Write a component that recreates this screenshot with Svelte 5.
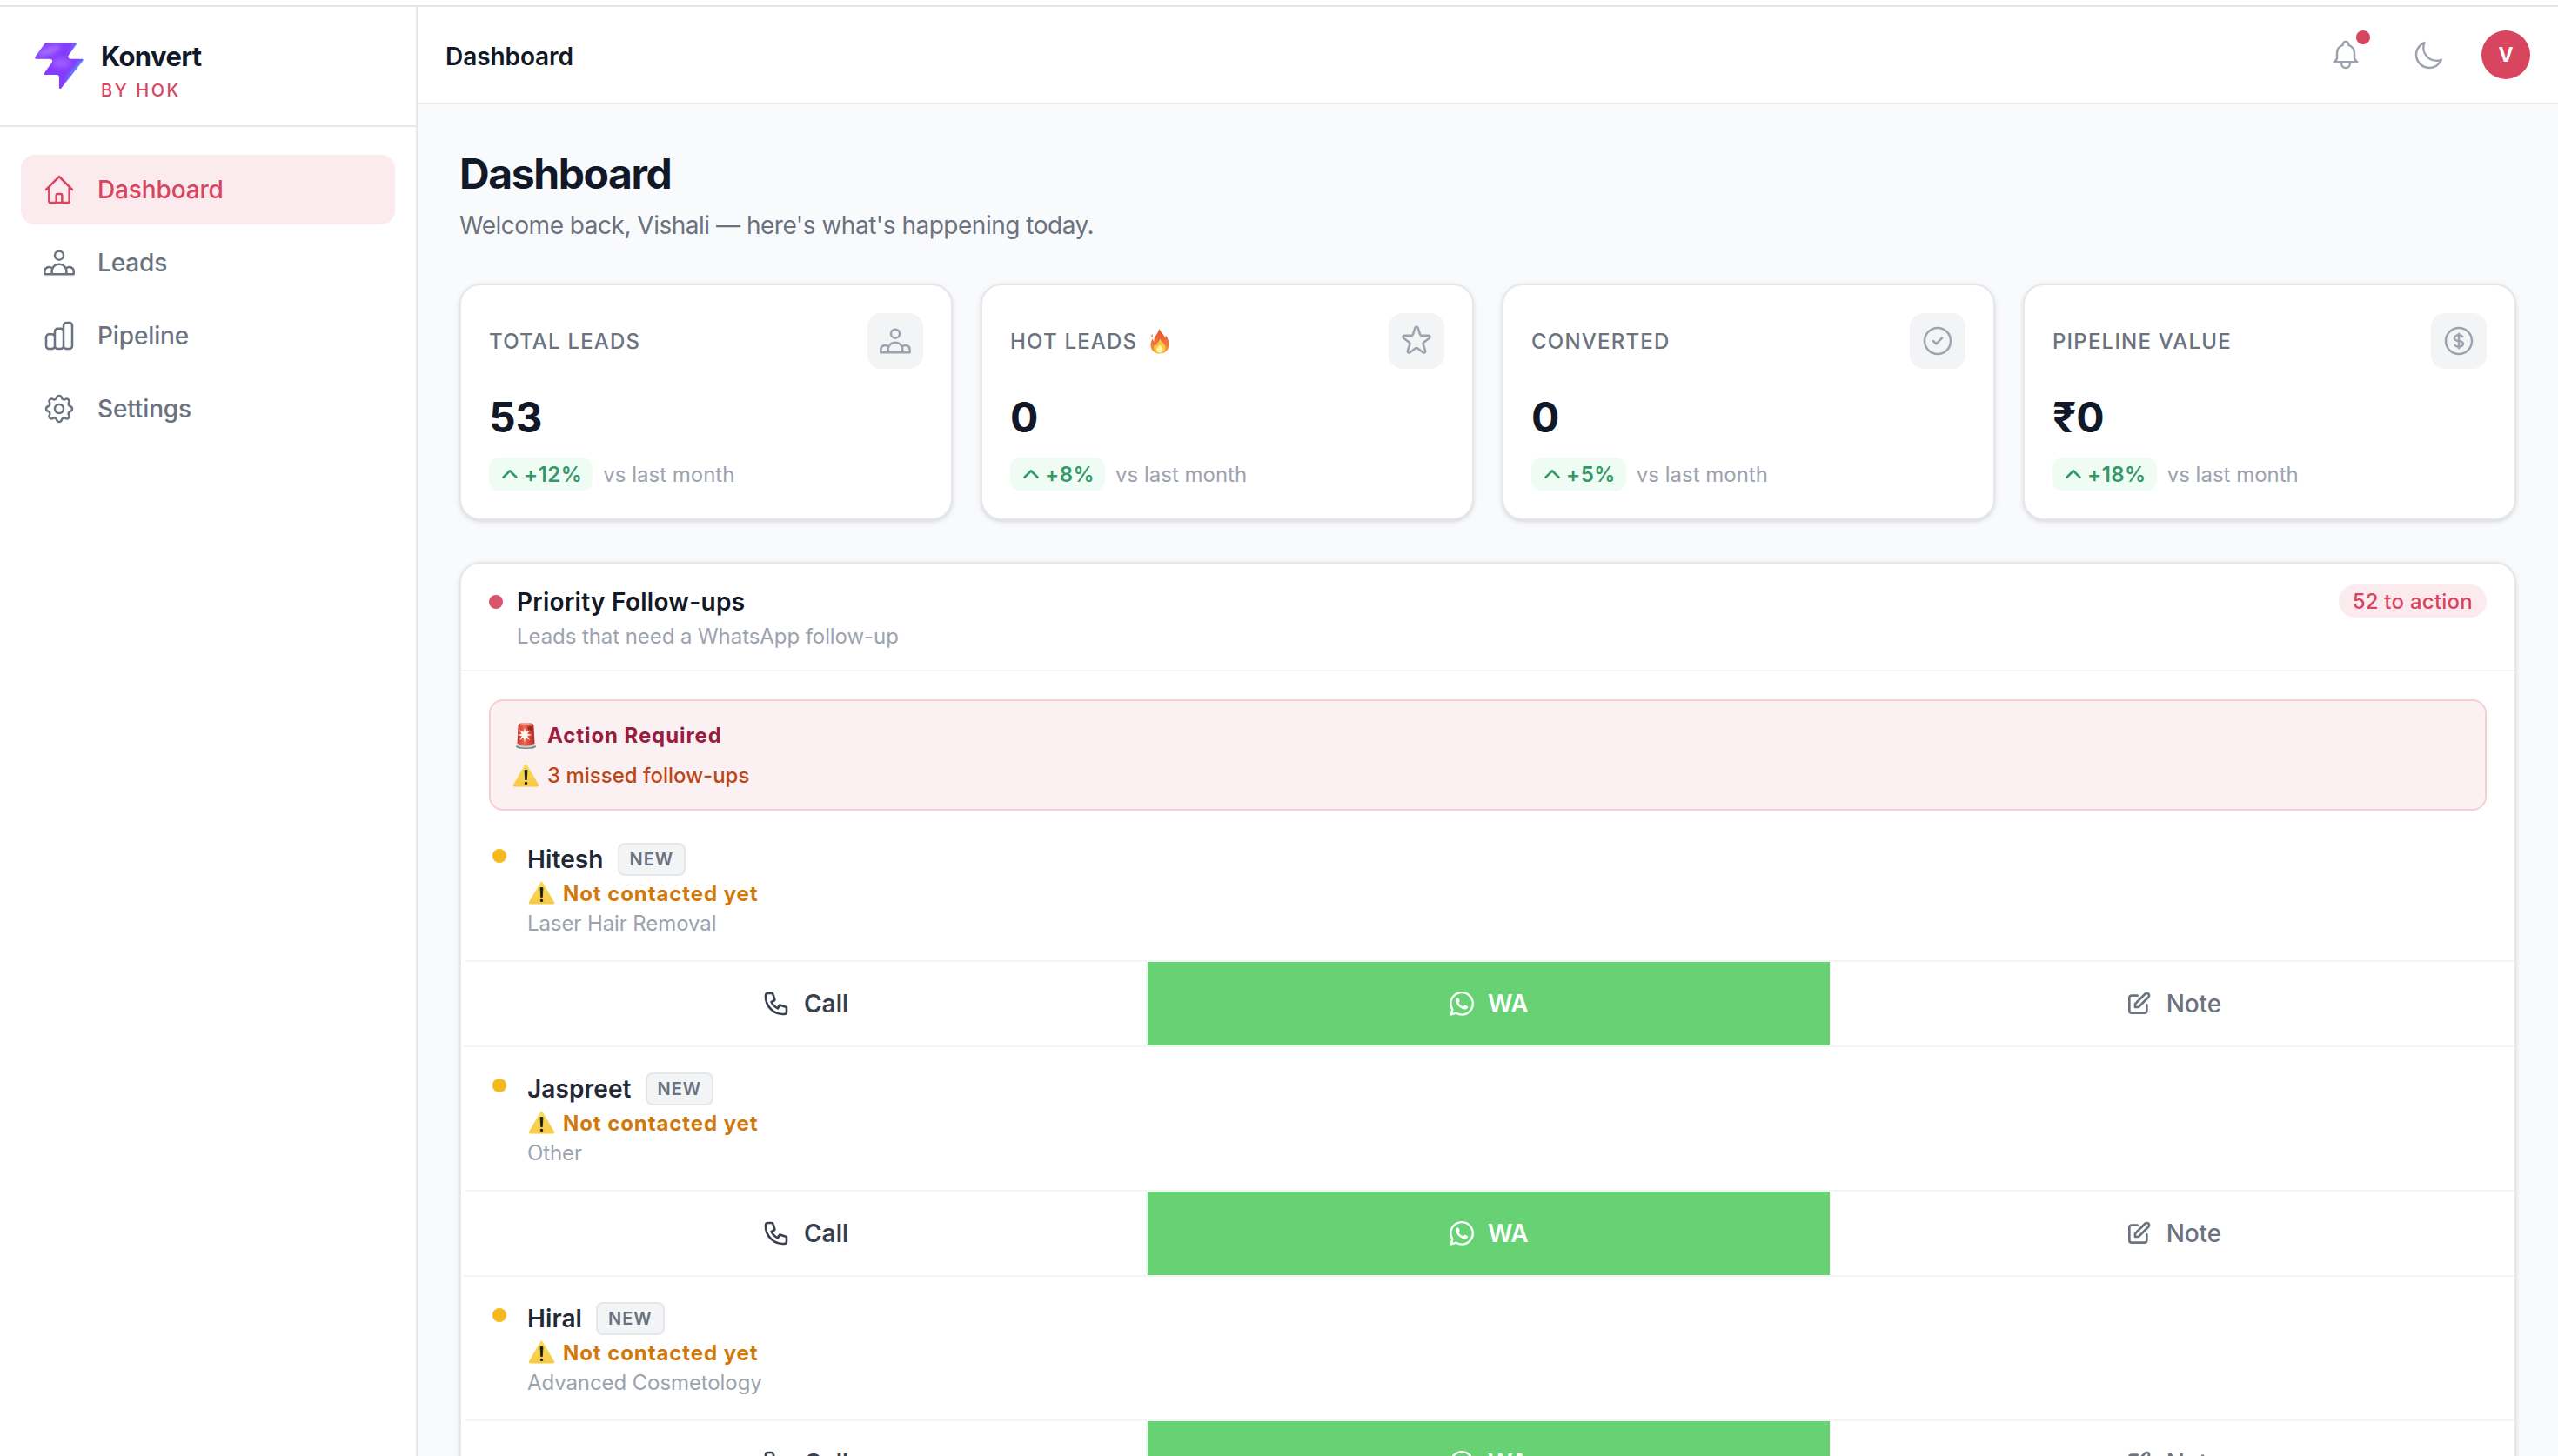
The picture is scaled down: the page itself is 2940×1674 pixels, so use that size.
<script lang="ts">
  type Lead = { name: string; interest: string };

  const icons: Record<string, string> = {
    home: 'M3 12l2-2m0 0l7-7 7 7M5 10v10a1 1 0 001 1h3m10-11l2 2m-2-2v10a1 1 0 01-1 1h-3m-6 0a1 1 0 001-1v-4a1 1 0 011-1h2a1 1 0 011 1v4a1 1 0 001 1m-6 0h6',
    users: 'M17 20h5v-2a3 3 0 00-5.356-1.857M17 20H7m10 0v-2c0-.656-.126-1.283-.356-1.857M7 20H2v-2a3 3 0 015.356-1.857M7 20v-2c0-.656.126-1.283.356-1.857m0 0a5.002 5.002 0 019.288 0M15 7a3 3 0 11-6 0 3 3 0 016 0z',
    chart: 'M9 19v-6a2 2 0 00-2-2H5a2 2 0 00-2 2v6a2 2 0 002 2h2a2 2 0 002-2zm0 0V9a2 2 0 012-2h2a2 2 0 012 2v10m-6 0a2 2 0 002 2h2a2 2 0 002-2m0 0V5a2 2 0 012-2h2a2 2 0 012 2v14a2 2 0 01-2 2h-2a2 2 0 01-2-2z',
    cog: 'M10.325 4.317c.426-1.756 2.924-1.756 3.35 0a1.724 1.724 0 002.573 1.066c1.543-.94 3.31.826 2.37 2.37a1.724 1.724 0 001.065 2.572c1.756.426 1.756 2.924 0 3.35a1.724 1.724 0 00-1.066 2.573c.94 1.543-.826 3.31-2.37 2.37a1.724 1.724 0 00-2.572 1.065c-.426 1.756-2.924 1.756-3.35 0a1.724 1.724 0 00-2.573-1.066c-1.543.94-3.31-.826-2.37-2.37a1.724 1.724 0 00-1.065-2.572c-1.756-.426-1.756-2.924 0-3.35a1.724 1.724 0 001.066-2.573c-.94-1.543.826-3.31 2.37-2.37.996.608 2.296.07 2.572-1.065zM15 12a3 3 0 11-6 0 3 3 0 016 0z',
    star: 'M11.049 2.927c.3-.921 1.603-.921 1.902 0l1.519 4.674a1 1 0 00.95.69h4.915c.969 0 1.371 1.24.588 1.81l-3.976 2.888a1 1 0 00-.363 1.118l1.518 4.674c.3.922-.755 1.688-1.538 1.118l-3.976-2.888a1 1 0 00-1.176 0l-3.976 2.888c-.783.57-1.838-.197-1.538-1.118l1.518-4.674a1 1 0 00-.363-1.118l-3.976-2.888c-.784-.57-.38-1.81.588-1.81h4.914a1 1 0 00.951-.69l1.519-4.674z',
    check: 'M9 12l2 2 4-4m6 2a9 9 0 11-18 0 9 9 0 0118 0z',
    dollar: 'M12 8c-1.657 0-3 .895-3 2s1.343 2 3 2 3 .895 3 2-1.343 2-3 2m0-8c1.11 0 2.08.402 2.599 1M12 8V7m0 1v8m0 0v1m0-1c-1.11 0-2.08-.402-2.599-1M21 12a9 9 0 11-18 0 9 9 0 0118 0z',
    bell: 'M15 17h5l-1.405-1.405A2.032 2.032 0 0118 14.158V11a6.002 6.002 0 00-4-5.659V5a2 2 0 10-4 0v.341C7.67 6.165 6 8.388 6 11v3.159c0 .538-.214 1.055-.595 1.436L4 17h5m6 0v1a3 3 0 11-6 0v-1m6 0H9',
    moon: 'M20.354 15.354A9 9 0 018.646 3.646 9.003 9.003 0 0012 21a9.003 9.003 0 008.354-5.646z',
    up: 'M4.5 15.75l7.5-7.5 7.5 7.5',
    phone: 'M3 5a2 2 0 012-2h3.28a1 1 0 01.948.684l1.498 4.493a1 1 0 01-.502 1.21l-2.257 1.13a11.042 11.042 0 005.516 5.516l1.13-2.257a1 1 0 011.21-.502l4.493 1.498a1 1 0 01.684.949V19a2 2 0 01-2 2h-1C9.716 21 3 14.284 3 6V5z',
    edit: 'M11 5H6a2 2 0 00-2 2v11a2 2 0 002 2h11a2 2 0 002-2v-5m-1.414-9.414a2 2 0 112.828 2.828L11.828 15H9v-2.828l8.586-8.586z',
  };

  const bolt =
    'M25.946 44.938c-.664.845-2.021.375-2.021-.698V33.937a2.26 2.26 0 0 0-2.262-2.262H10.287c-.92 0-1.456-1.04-.92-1.788l7.48-10.471c1.07-1.497 0-3.578-1.842-3.578H1.237c-.92 0-1.456-1.04-.92-1.788L10.013.474c.214-.297.556-.474.92-.474h28.894c.92 0 1.456 1.04.92 1.788l-7.48 10.471c-1.07 1.498 0 3.579 1.842 3.579h11.377c.943 0 1.473 1.088.89 1.83L25.947 44.94z';

  const nav = [
    { label: 'Dashboard', icon: 'home' },
    { label: 'Leads', icon: 'users' },
    { label: 'Pipeline', icon: 'chart' },
    { label: 'Settings', icon: 'cog' },
  ];

  const stats = [
    { label: 'Total Leads', value: '53', change: '+12%', icon: 'users', hot: false },
    { label: 'Hot Leads', value: '0', change: '+8%', icon: 'star', hot: true },
    { label: 'Converted', value: '0', change: '+5%', icon: 'check', hot: false },
    { label: 'Pipeline Value', value: '₹0', change: '+18%', icon: 'dollar', hot: false },
  ];

  const leads: Lead[] = [
    { name: 'Hitesh', interest: 'Laser Hair Removal' },
    { name: 'Jaspreet', interest: 'Other' },
    { name: 'Hiral', interest: 'Advanced Cosmetology' },
  ];

  let active = $state('Dashboard');
</script>

{#snippet icon(name: string, kind: string)}
  <svg class="icon {kind}" viewBox="0 0 24 24" aria-hidden="true">
    <path d={icons[name]} />
  </svg>
{/snippet}

{#snippet warning()}
  <svg class="emoji" viewBox="0 0 32 32" aria-hidden="true">
    <path d="M15.1 3.6q1.4-2.2 2.8 0l13 22.4q1 2.4-1.4 2.6h-26q-2.4-.2-1.4-2.6z" fill="url(#warn)" />
    <path d="M15 9.6h3l-.7 11h-1.6z" fill="#1b1a10" stroke="#1b1a10" stroke-width=".8" stroke-linejoin="round" />
    <circle cx="16.5" cy="24.4" r="1.7" fill="#1b1a10" />
  </svg>
{/snippet}

<svg class="defs" width="0" height="0" aria-hidden="true">
  <defs>
    <linearGradient id="warn" x1="0" y1="0" x2="0" y2="1">
      <stop offset="0" stop-color="#f7de62" />
      <stop offset="1" stop-color="#f7c843" />
    </linearGradient>
    <linearGradient id="flame" x1="0" y1="0" x2="0" y2="1">
      <stop offset="0" stop-color="#e8502f" />
      <stop offset=".6" stop-color="#f0763a" />
      <stop offset="1" stop-color="#f6a83c" />
    </linearGradient>
    <linearGradient id="siren" x1="0" y1="0" x2="1" y2="0">
      <stop offset="0" stop-color="#c8352b" />
      <stop offset=".4" stop-color="#ee6a52" />
      <stop offset="1" stop-color="#b52c22" />
    </linearGradient>
    <clipPath id="boltClip"><path d={bolt} /></clipPath>
    <filter id="soft" x="-50%" y="-50%" width="200%" height="200%">
      <feGaussianBlur stdDeviation="2.5" />
    </filter>
  </defs>
</svg>

<div class="app">
  <aside class="sidebar">
    <div class="brand">
      <svg class="logo" viewBox="0 0 48 46" aria-hidden="true">
        <path d={bolt} fill="#863bff" />
        <g clip-path="url(#boltClip)">
          <g filter="url(#soft)">
            <ellipse cx="14" cy="8" rx="12" ry="4" fill="#a06bff" transform="rotate(-20 14 8)" />
            <ellipse cx="26" cy="20" rx="9" ry="5" fill="#9a5cff" />
            <ellipse cx="42" cy="4" rx="4" ry="10" fill="#5b8dff" transform="rotate(30 42 4)" />
            <ellipse cx="41" cy="30" rx="4.5" ry="17" fill="#47a5ff" transform="rotate(35 41 30)" />
          </g>
        </g>
      </svg>
      <div class="brand-text">
        <span class="brand-name">Konvert</span>
        <span class="brand-by">BY HOK</span>
      </div>
    </div>
    <nav>
      {#each nav as item}
        <button class="nav-item" class:active={active === item.label} onclick={() => (active = item.label)}>
          {@render icon(item.icon, 'md')}
          <span>{item.label}</span>
        </button>
      {/each}
    </nav>
  </aside>

  <div class="content">
    <header class="topbar">
      <span class="topbar-title">Dashboard</span>
      <div class="tools">
        <button class="tool" aria-label="Notifications">
          {@render icon('bell', 'md')}
          <span class="unread"></span>
        </button>
        <button class="tool" aria-label="Theme">{@render icon('moon', 'md')}</button>
        <div class="avatar">V</div>
      </div>
    </header>

    <main>
      <h1>Dashboard</h1>
      <p class="welcome">Welcome back, Vishali — here's what's happening today.</p>

      <section class="stats">
        {#each stats as stat}
          <div class="card">
            <div class="card-top">
              <span class="card-label">
                {stat.label}
                {#if stat.hot}
                  <svg class="flame" viewBox="0 0 24 32" aria-hidden="true">
                    <path d="M11 .5c1 4 6 6.500 7.500 12 .6-1 .8-2.300.7-3.600 3 4 4 8 4 12 0 6.500-5 10.600-11 10.600S.8 27.500.8 21.500c0-3.500 1-6 2.600-8.200.2 1.600.8 2.600 1.500 3.200C4.600 9.500 11 7 11 .5z" fill="url(#flame)" />
                    <path d="M2.500 7.500c-1 1.500-1.300 3 0 4.500 1-1 1-3 0-4.500z" fill="#f0763a" />
                    <path d="M12.500 13c.5 4 6.500 6 6.500 11.500 0 4-3 6.500-7 6.500s-7.200-2.500-7.200-6.500c0-2 .7-3.500 1.700-4.700.5 1 1 1.600 1.800 2C8 18.500 11.500 17 12.500 13z" fill="#fac63f" />
                    <path d="M12 20.500c1 2 3.800 3 3.800 6 0 2.500-1.700 4-3.900 4s-3.900-1.500-3.900-4c0-2.500 3-3.500 4-6z" fill="#fff6a8" />
                  </svg>
                {/if}
              </span>
              <span class="card-icon">{@render icon(stat.icon, 'md')}</span>
            </div>
            <div class="card-value">{stat.value}</div>
            <div class="card-trend">
              <span class="change">{@render icon('up', 'xs')}{stat.change}</span>
              <span class="period">vs last month</span>
            </div>
          </div>
        {/each}
      </section>

      <section class="panel">
        <div class="panel-head">
          <span class="pulse"></span>
          <div class="panel-text">
            <h2>Priority Follow-ups</h2>
            <p>Leads that need a WhatsApp follow-up</p>
          </div>
          <span class="count">52 to action</span>
        </div>

        <div class="alert">
          <div class="alert-title">
            <svg class="emoji" viewBox="0 0 32 32" aria-hidden="true">
              <path d="M5 26h23v2.500q-1 2.500-11.500 2.500T5 28.500z" fill="#7c7f80" />
              <path d="M5 25.500q11.500 4 23 0v2q-11.500 4.500-23 0z" fill="#c9cccc" />
              <path d="M7.500 4.500Q8 1.600 11 1.500h11q3 .1 3.500 3L26.500 25q-10 4.500-20 0z" fill="url(#siren)" />
              <path d="M18 6l6-1.500-.5 5-3.500 2z" fill="#9c2a20" />
              <path d="M10 3.500q6.500-2 13 0" fill="none" stroke="#f59a84" stroke-width="1.500" />
              <path d="M15 6.500l1.300 5.300 4.700-2.600-2.800 4.500 5.300 1.300-5.300 1.200 2.800 4.800-4.700-2.800L15 23.500l-1.200-5.300L9 21l2.700-4.800L6.500 15l5.200-1.300L9 9.200l4.800 2.600z" fill="#fff3ec" />
            </svg>
            Action Required
          </div>
          <div class="alert-line">{@render warning()}3 missed follow-ups</div>
        </div>

        {#each leads as lead}
          <article class="lead">
            <div class="lead-body">
              <span class="lead-dot"></span>
              <div>
                <div class="lead-name">{lead.name}<span class="tag">NEW</span></div>
                <div class="lead-status">{@render warning()}Not contacted yet</div>
                <div class="lead-interest">{lead.interest}</div>
              </div>
            </div>
            <div class="actions">
              <button class="action call">{@render icon('phone', 'sm')}Call</button>
              <button class="action wa">
                <svg class="wa-icon" viewBox="0 0 24 24" aria-hidden="true">
                  <path d="M17.472 14.382c-.297-.149-1.758-.867-2.030-.967-.273-.099-.471-.148-.670.150-.197.297-.767.966-.940 1.164-.173.199-.347.223-.644.075-.297-.150-1.255-.463-2.390-1.475-.883-.788-1.480-1.761-1.653-2.059-.173-.297-.018-.458.130-.606.134-.133.298-.347.446-.520.149-.174.198-.298.298-.497.099-.198.050-.371-.025-.520-.075-.149-.669-1.612-.916-2.207-.242-.579-.487-.500-.669-.510-.173-.008-.371-.010-.570-.010-.198 0-.520.074-.792.372-.272.297-1.040 1.016-1.040 2.479 0 1.462 1.065 2.875 1.213 3.074.149.198 2.096 3.200 5.077 4.487.709.306 1.262.489 1.694.625.712.227 1.360.195 1.871.118.571-.085 1.758-.719 2.006-1.413.248-.694.248-1.289.173-1.413-.074-.124-.272-.198-.570-.347m-5.421 7.403h-.004a9.870 9.870 0 01-5.031-1.378l-.361-.214-3.741.982.998-3.648-.235-.374a9.860 9.860 0 01-1.510-5.260c.001-5.450 4.436-9.884 9.888-9.884 2.640 0 5.122 1.030 6.988 2.898a9.825 9.825 0 012.893 6.994c-.003 5.450-4.437 9.884-9.885 9.884m8.413-18.297A11.815 11.815 0 0012.050 0C5.495 0 .160 5.335.157 11.892c0 2.096.547 4.142 1.588 5.945L.057 24l6.305-1.654a11.882 11.882 0 005.683 1.448h.005c6.554 0 11.890-5.335 11.893-11.893a11.821 11.821 0 00-3.480-8.413z" />
                </svg>
                WA
              </button>
              <button class="action note">{@render icon('edit', 'sm')}Note</button>
            </div>
          </article>
        {/each}
      </section>
    </main>
  </div>
</div>

<style>
  :global(body) {
    overflow: hidden;
    background: #fff;
  }

  :global(#app) {
    padding-top: 6px;
    height: 1668px;
    overflow: hidden;
  }

  .defs { position: absolute; }

  .app {
    display: flex;
    box-sizing: border-box;
    height: 1668px;
    border-top: 2px solid #e4e5e6;
    font-family: Inter, 'Noto Sans', sans-serif;
    font-size: 28px;
    color: #111827;
    overflow: hidden;
  }

  .app * { box-sizing: border-box; }

  button {
    font: inherit;
    color: inherit;
    background: none;
    border: 0;
    padding: 0;
    cursor: pointer;
  }

  .icon {
    flex: none;
    width: 40px;
    height: 40px;
    fill: none;
    stroke: currentColor;
    stroke-width: 1.5;
    stroke-linecap: round;
    stroke-linejoin: round;
  }
  .icon.sm { width: 32px; height: 32px; stroke-width: 2; }
  .icon.xs { width: 24px; height: 24px; stroke-width: 2.5; }

  .emoji { flex: none; width: 32px; height: 32px; }

  .sidebar {
    flex: none;
    width: 480px;
    border-right: 2px solid #e5e7eb;
    background: #fff;
  }

  .brand {
    display: flex;
    gap: 20px;
    height: 138px;
    padding: 34px 40px 0;
    border-bottom: 2px solid #e5e7eb;
  }

  .logo { width: 56px; height: 68px; }

  .brand-text { display: flex; flex-direction: column; padding-top: 3px; }

  .brand-name {
    font-size: 31px;
    font-weight: 700;
    line-height: 40px;
    letter-spacing: -0.02em;
  }

  .brand-by {
    margin-top: 3px;
    font-size: 20px;
    font-weight: 500;
    line-height: 32px;
    letter-spacing: 0.13em;
    color: #d9445f;
  }

  nav {
    display: flex;
    flex-direction: column;
    gap: 4px;
    padding: 32px 24px;
  }

  .nav-item {
    display: flex;
    align-items: center;
    gap: 24px;
    height: 80px;
    padding: 0 24px;
    border-radius: 16px;
    font-weight: 500;
    letter-spacing: -0.005em;
    color: #6b7280;
  }
  .nav-item.active { background: #fbebee; color: #d9445f; }

  .content {
    flex: 1;
    display: flex;
    flex-direction: column;
    min-width: 0;
    background: #f9fafc;
  }

  .topbar {
    flex: none;
    display: flex;
    align-items: center;
    justify-content: space-between;
    height: 112px;
    padding: 0 32px;
    border-bottom: 2px solid #e5e7eb;
    background: #fff;
  }

  .topbar-title {
    padding-top: 3px;
    font-weight: 600;
    letter-spacing: -0.003em;
  }

  .tools { display: flex; align-items: center; gap: 24px; }

  .tool {
    position: relative;
    display: flex;
    padding: 16px;
    color: #9ca3af;
  }

  .unread {
    position: absolute;
    top: 8px;
    right: 8px;
    width: 16px;
    height: 16px;
    border-radius: 50%;
    background: #d7455e;
  }

  .avatar {
    display: grid;
    place-items: center;
    width: 56px;
    height: 56px;
    border-radius: 50%;
    background: #d7455e;
    color: #fff;
    font-size: 23px;
    font-weight: 700;
  }

  main { padding: 48px; }

  h1, h2, p { margin: 0; }

  h1 {
    font-size: 48px;
    font-weight: 700;
    line-height: 64px;
    letter-spacing: -0.029em;
  }

  .welcome {
    margin-top: 7px;
    line-height: 40px;
    letter-spacing: -0.0175em;
    color: #6b7280;
  }

  .stats {
    display: grid;
    grid-template-columns: repeat(4, 1fr);
    gap: 32px;
    margin: 47px 0 48px;
  }

  .card {
    height: 272px;
    padding: 32px;
    border: 2px solid #e5e7eb;
    border-radius: 24px;
    background: #fff;
    box-shadow: 0 2px 6px rgba(0, 0, 0, 0.1), 0 2px 4px -2px rgba(0, 0, 0, 0.1);
  }

  .card-top {
    display: flex;
    align-items: center;
    justify-content: space-between;
  }

  .card-label {
    display: flex;
    align-items: center;
    gap: 13px;
    font-size: 24px;
    font-weight: 500;
    letter-spacing: 0.05em;
    text-transform: uppercase;
    color: #6b7280;
  }

  .flame { width: 26px; height: 30px; }

  .card-icon {
    display: grid;
    place-items: center;
    width: 64px;
    height: 64px;
    border-radius: 16px;
    background: #f3f4f6;
    color: #9ca3af;
  }

  .card-value {
    margin-top: 24px;
    font-size: 48px;
    font-weight: 700;
    line-height: 64px;
    letter-spacing: -0.005em;
  }

  .card-trend {
    display: flex;
    align-items: center;
    gap: 12px;
    margin-top: 14px;
    font-size: 24px;
  }

  .change {
    display: flex;
    align-items: center;
    gap: 4px;
    height: 38px;
    padding: 0 12px;
    border-radius: 12px;
    background: #eefcf4;
    font-weight: 600;
    letter-spacing: 0.02em;
    color: #349868;
  }

  .period { color: #9ca3af; }

  .panel {
    height: 1200px;
    border: 2px solid #e5e7eb;
    border-radius: 24px;
    background: #fff;
    box-shadow: 0 2px 6px rgba(0, 0, 0, 0.1), 0 2px 4px -2px rgba(0, 0, 0, 0.1);
  }

  .panel-head {
    display: flex;
    align-items: flex-start;
    gap: 16px;
    height: 124px;
    padding: 24px 32px;
    border-bottom: 2px solid #f3f4f6;
  }

  .pulse {
    width: 16px;
    height: 16px;
    margin-top: 12px;
    border-radius: 50%;
    background: #d9546b;
  }

  .panel-text { flex: 1; }

  h2 {
    font-size: 28px;
    font-weight: 600;
    line-height: 40px;
    letter-spacing: 0.01em;
  }

  .panel-text p {
    margin-top: 2px;
    font-size: 24px;
    line-height: 36px;
    letter-spacing: -0.003em;
    color: #9ca3af;
  }

  .count {
    height: 38px;
    padding: 0 16px;
    border-radius: 19px;
    background: #fbebee;
    font-size: 24px;
    font-weight: 500;
    line-height: 40px;
    letter-spacing: 0.01em;
    color: #d9445f;
  }

  .alert {
    display: flex;
    flex-direction: column;
    gap: 14px;
    height: 128px;
    margin: 32px 32px 8px;
    padding: 24px;
    border: 2px solid #f6cdd3;
    border-radius: 16px;
    background: #fbf0f2;
    font-size: 24px;
    line-height: 32px;
  }

  .alert-title, .alert-line, .lead-status {
    display: flex;
    align-items: center;
    gap: 9px;
  }

  .alert-title { font-weight: 700; letter-spacing: 0.038em; color: #9a1c3e; }

  .alert-line { font-weight: 500; color: #bd4614; }

  .lead {
    height: 264px;
    border-left: 4px solid transparent;
    border-bottom: 2px solid #f3f4f6;
  }

  .lead-body {
    display: flex;
    gap: 24px;
    height: 164px;
    padding: 28px 32px;
  }

  .lead-dot {
    width: 16px;
    height: 16px;
    margin-top: 8px;
    border-radius: 50%;
    background: #f4b91f;
  }

  .lead-name {
    display: flex;
    align-items: center;
    gap: 16px;
    height: 40px;
    font-weight: 600;
    letter-spacing: 0.004em;
    color: #1f2937;
  }

  .tag {
    padding: 0 12px;
    border: 2px solid #e5e7eb;
    border-radius: 8px;
    background: #f3f4f6;
    font-size: 20px;
    line-height: 34px;
    letter-spacing: 0.05em;
    color: #6b7280;
  }

  .lead-status {
    height: 38px;
    font-size: 24px;
    font-weight: 700;
    letter-spacing: 0.038em;
    color: #d0790c;
  }

  .lead-interest {
    font-size: 24px;
    line-height: 32px;
    letter-spacing: -0.004em;
    color: #9ca3af;
  }

  .actions {
    display: grid;
    grid-template-columns: repeat(3, 1fr);
    height: 98px;
    border-top: 2px solid #f3f4f6;
  }

  .action {
    display: flex;
    align-items: center;
    justify-content: center;
    gap: 16px;
    border-right: 2px solid #f3f4f6;
    font-weight: 600;
  }
  .action:last-child { border-right: 0; }

  .call { color: #374151; }
  .wa { background: #67d273; color: #fff; letter-spacing: -0.015em; }
  .note { color: #6b7280; font-weight: 500; letter-spacing: -0.005em; }

  .wa-icon { width: 28px; height: 28px; fill: currentColor; }
</style>
